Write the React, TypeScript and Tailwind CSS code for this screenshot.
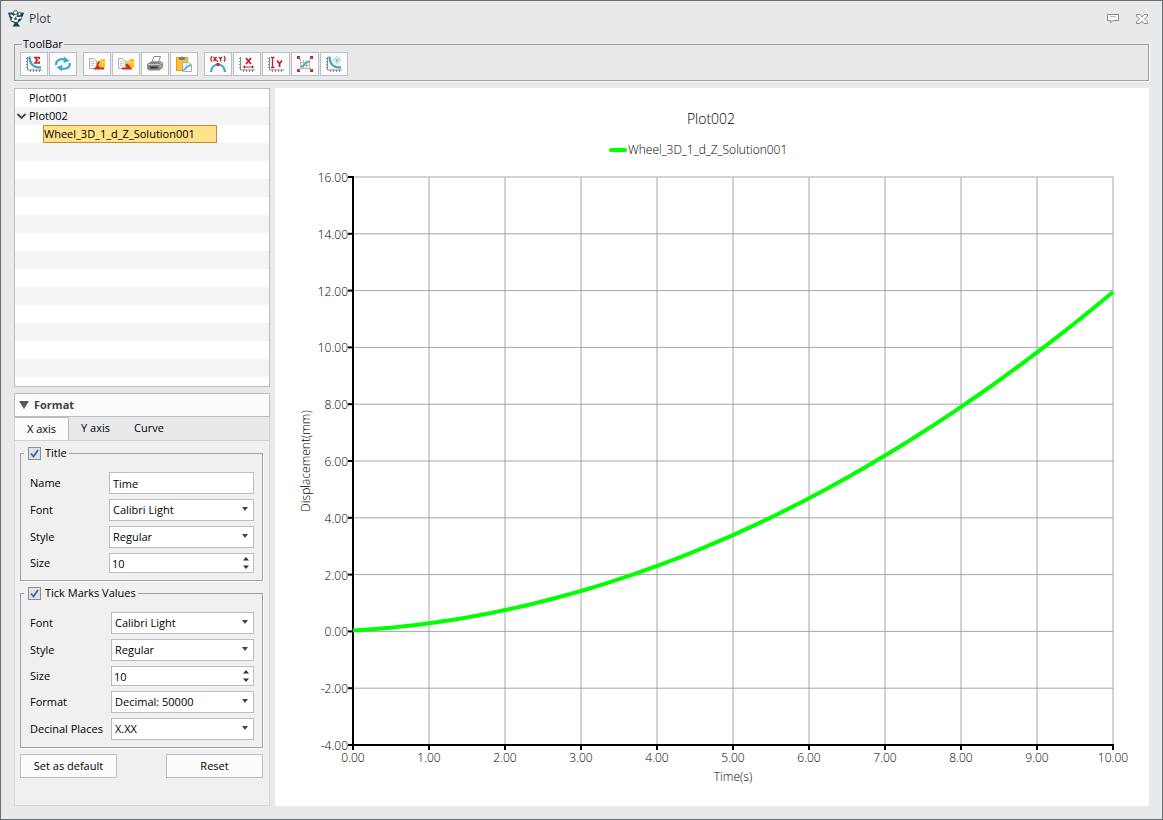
import { useState } from "react";
import type { ReactNode } from "react";

const icons: Record<string, ReactNode> = {
  curveSum: (
    <>
      <ChartAxes />
      <path d="M3.5 0.5C4 8.5 7 11.5 15 11.5" fill="none" stroke="#3fa9c9" strokeWidth="2.4" />
      <path d="M13.2 3.200V1.500H9l2.200 2.700L9 7h4.200V5.500" fill="none" stroke="#c3202c" strokeWidth="1.6" />
    </>
  ),
  refresh: (
    <>
      <path d="M1.200 9C0.500 4 5.500 2.200 11 3.800" fill="none" stroke="#3fa9c9" strokeWidth="2.200" />
      <path d="M9 0.500L14.500 5L8.500 7Z" fill="#3fa9c9" />
      <path d="M14.800 7C15.500 12 10.500 13.800 5 12.200" fill="none" stroke="#3fa9c9" strokeWidth="2.200" />
      <path d="M7 15.500L1.500 11L7.500 9Z" fill="#3fa9c9" />
    </>
  ),
  importFile: (
    <>
      <FileToFolder />
      <path d="M4 13.500L9 8.500L11 11.500H15V13.500Z" fill="#cf2a2a" />
      <path d="M8 9L10.500 5.500" stroke="#cf2a2a" strokeWidth="1.500" />
    </>
  ),
  exportFile: (
    <>
      <FileToFolder />
      <path d="M4 13.500V11.500H9L7 9L9.500 7.500L14.500 13.500Z" fill="#cf2a2a" />
    </>
  ),
  print: (
    <>
      <path d="M5 6L7 0.500H13.500L11.500 6Z" fill="#fff" stroke="#8a8a8a" />
      <path d="M0 8L4 5.500H14L16 7V11L12.500 14.500H2L0 12.500Z" fill="#85878a" />
      <path d="M1 8.500H12L15 7" fill="none" stroke="#c5c7c9" />
      <path d="M3 11.500H10.500" stroke="#36383a" strokeWidth="2" />
      <circle cx="13.500" cy="10" r="1" fill="#d9ce3d" />
    </>
  ),
  paste: (
    <>
      <rect x="0.500" y="1.500" width="11" height="13" fill="#fcc23a" stroke="#e39a1e" />
      <path d="M3 4V1.500H5L6 0L7 1.500H9V4Z" fill="#777b80" />
      <path d="M6.500 6.500H13L15.500 9V15.500H6.500Z" fill="#f8fafb" stroke="#a4abb0" />
      <path d="M7 11H15M10.500 7V15" stroke="#d2d7da" />
      <path d="M7 14C10 14 9 10 15 9" fill="none" stroke="#3fa9c9" strokeWidth="1.500" />
    </>
  ),
  pointXY: (
    <>
      <path d="M1 16C2 6 14 6 15 16" fill="none" stroke="#3fa9c9" strokeWidth="2.200" />
      <rect x="6.500" y="7" width="3" height="3" fill="#d02530" />
      <path
        d="M2 0Q0 3 2 5.500M3.500 1L6.500 5M6.500 1L3.500 5M7.500 4.500V6M9 1L10.500 3L12 1M10.500 3V5.500M14 0Q16 3 14 5.500"
        fill="none"
        stroke="#c3202c"
        strokeWidth="1.300"
      />
    </>
  ),
  rangeX: (
    <>
      <ChartAxes />
      <path d="M7 2L12 8M12 2L7 8" stroke="#c3202c" strokeWidth="1.800" />
      <path d="M4 11H14.500M5.500 9.500V12.500M13.500 9.500V12.500" stroke="#c3202c" strokeWidth="1.200" />
    </>
  ),
  rangeY: (
    <>
      <ChartAxes />
      <path d="M4.500 1.500V11.500M3 1.500H6.500M3 11.500H6.500" stroke="#c3202c" strokeWidth="1.300" />
      <path d="M9 4.500L11.500 7.500L14 4.500M11.500 7.500V11" fill="none" stroke="#c3202c" strokeWidth="1.800" />
    </>
  ),
  fitAll: (
    <>
      <path d="M3.500 3V12.500H14M6.500 4V12M9.500 4V12M12.500 4V12M4 6.500H13M4 9.500H13" fill="none" stroke="#b4b8bb" />
      <path d="M4 11C8 10 6 7 13 5" fill="none" stroke="#3fa9c9" strokeWidth="1.800" />
      <path
        d="M0.500 3V0.500H3M0.500 0.500L3 3M13 0.500H15.500V3M15.500 0.500L13 3M0.500 13V15.500H3M0.500 15.500L3 13M13 15.500H15.500V13M15.500 15.500L13 13"
        fill="none"
        stroke="#c3202c"
        strokeWidth="1.300"
      />
    </>
  ),
  curveSettings: (
    <>
      <ChartAxes />
      <path d="M3.500 0.500C4 8.500 7 11.500 15 11.500" fill="none" stroke="#3fa9c9" strokeWidth="2.400" />
      <circle cx="11" cy="4" r="3.300" fill="#e3f3f8" stroke="#8fc7da" strokeDasharray="1.500 0.800" />
      <path d="M9.500 3L11 4.500L12.500 3M11 4.500V6" fill="none" stroke="#3f8fb0" />
    </>
  ),
};

const toolGroups = [
  [
    { icon: "curveSum", label: "Curve statistics" },
    { icon: "refresh", label: "Refresh" },
  ],
  [
    { icon: "importFile", label: "Import" },
    { icon: "exportFile", label: "Export" },
    { icon: "print", label: "Print" },
    { icon: "paste", label: "Copy to clipboard" },
  ],
  [
    { icon: "pointXY", label: "Show coordinates" },
    { icon: "rangeX", label: "X range" },
    { icon: "rangeY", label: "Y range" },
    { icon: "fitAll", label: "Fit all" },
    { icon: "curveSettings", label: "Curve settings" },
  ],
];

function ChartAxes() {
  return (
    <>
      <path d="M1.500 1V14H16" fill="none" stroke="#85898d" />
      <path
        d="M0 2.500H1M0 5.500H1M0 8.500H1M0 11.500H1M4.500 14V16M7.500 14V16M10.500 14V16M13.500 14V16"
        stroke="#85898d"
      />
    </>
  );
}

function FileToFolder() {
  return (
    <>
      <path d="M0.500 2.500H4.500L7.500 5V12.500H0.500Z" fill="#f6f6f6" stroke="#b0b3b6" />
      <path d="M2 5.500H5M2 7.500H6M2 9.500H5" stroke="#c9cbcd" />
      <path d="M7.500 5H11L12 3H16V12H7.500Z" fill="#fbc02d" />
      <path d="M8 6.500H16" stroke="#ffdf6b" />
    </>
  );
}

function Logo() {
  return (
    <svg className="w-4 h-[18px]" viewBox="0 0 16 18" aria-hidden="true">
      <path d="M0.500 3H15.500L12.500 10L9 13H6.500L3 10Z" fill="#1a84b8" stroke="#0e4d70" />
      <path d="M11.500 5L15.500 3L13 10L9.500 12Z" fill="#0b3a55" />
      <path d="M4.500 16.500L7 13H9.500L12 16.500Z" fill="#123b52" />
      <path
        d="M3 5L6 7.500L4.500 10L8 11M6 7L9 4M8.500 12L10 8L13.500 7.500M10 8L8 7"
        fill="none"
        stroke="#16222a"
        strokeWidth="3"
      />
      <path
        d="M3 5L6 7.500L4.500 10L8 11M6 7L9 4M8.500 12L10 8L13.500 7.500M10 8L8 7"
        fill="none"
        stroke="#fff"
        strokeWidth="1.900"
      />
      <circle cx="7.500" cy="2.500" r="2" fill="#fff" stroke="#20303a" strokeWidth="0.800" />
      <circle cx="11.500" cy="4" r="1.500" fill="#fff" stroke="#20303a" strokeWidth="0.600" />
    </svg>
  );
}

function TitleBar() {
  return (
    <header className="flex items-center h-[35px] pl-[7px] pr-[14px]">
      <Logo />
      <h1 className="ml-[5px] flex-1 text-xs text-[#3c3f4a]">Plot</h1>
      <button className="mr-[17px]" aria-label="Feedback">
        <svg className="w-3 h-3" viewBox="0 0 12 12">
          <path d="M0.500 1.500H11.500V7.500H6L3.500 10V7.500H0.500Z" fill="#fff" stroke="#85888d" strokeLinejoin="round" />
          <path d="M3 3.500H9" stroke="#b5b8bb" />
        </svg>
      </button>
      <button aria-label="Close">
        <svg className="w-3 h-3" viewBox="0 0 12 12">
          <path
            d="M0.500 1.500H4L6 4L8 1.500H11.500V3L8.500 6L11.500 9V10.500H8L6 8L4 10.500H0.500V9L3.500 6L0.500 3Z"
            fill="#fff"
            stroke="#85888d"
          />
        </svg>
      </button>
    </header>
  );
}

function ToolBar() {
  return (
    <fieldset className="mx-[13px] border border-[#a0a0a0] px-[5px] pb-1 shadow-[1px_1px_0_#fff]">
      <legend className="ml-[2px] px-px text-[11px] leading-4 bg-[#e8e9eb]">ToolBar</legend>
      <div className="flex gap-[6px]">
        {toolGroups.map((group, i) => (
          <div key={i} className="flex gap-px">
            {group.map((tool) => (
              <button
                key={tool.icon}
                title={tool.label}
                aria-label={tool.label}
                className="flex items-center justify-center w-7 h-6 bg-[#fcfcfc] border border-[#babdc4] hover:bg-[#e6f1f8]"
              >
                <svg className="w-4 h-4" viewBox="0 0 16 16">
                  {icons[tool.icon]}
                </svg>
              </button>
            ))}
          </div>
        ))}
      </div>
    </fieldset>
  );
}

function PlotTree() {
  return (
    <ul className="h-[299px] overflow-hidden border border-[#babdc4] text-[11px] leading-[18px] bg-[repeating-linear-gradient(#fff_0_18px,#f5f5f5_18px_36px)]">
      <li className="pl-[14px]">Plot001</li>
      <li>
        <div className="flex items-center">
          <svg className="w-[14px] h-[10px]" viewBox="0 0 14 10">
            <path d="M2.500 3L6.500 7L10.500 3" fill="none" stroke="#444" strokeWidth="1.800" />
          </svg>
          Plot002
        </div>
        <ul className="pl-7">
          <li className="w-[174px] h-[18px] leading-4 border border-[#c28a35] bg-[#ffe38a]">
            Wheel_3D_1_d_Z_Solution001
          </li>
        </ul>
      </li>
    </ul>
  );
}

function Field({ id, label, children }: { id: string; label: string; children: ReactNode }) {
  return (
    <div className="flex items-center">
      <label htmlFor={id} className="flex-1 whitespace-nowrap">
        {label}
      </label>
      {children}
    </div>
  );
}

function SelectField({ id, label, options, width }: { id: string; label: string; options: string[]; width: string }) {
  return (
    <Field id={id} label={label}>
      <div className={`relative ${width}`}>
        <select id={id} className="block w-full h-[22px] pl-[3px] appearance-none bg-white border border-[#babdc4]">
          {options.map((option) => (
            <option key={option}>{option}</option>
          ))}
        </select>
        <svg className="absolute right-[6px] top-2 w-[6px] h-1 pointer-events-none" viewBox="0 0 6 4">
          <path d="M0 0H6L3 4Z" fill="#444" />
        </svg>
      </div>
    </Field>
  );
}

function SizeField({ id, width }: { id: string; width: string }) {
  return (
    <Field id={id} label="Size">
      <div className={`relative ${width}`}>
        <input
          id={id}
          type="number"
          defaultValue={10}
          className="block w-full h-5 pl-[2px] bg-white border border-[#babdc4] [appearance:textfield] [&::-webkit-inner-spin-button]:appearance-none"
        />
        <svg className="absolute right-[5px] top-1 w-[6px] h-3 pointer-events-none" viewBox="0 0 6 12">
          <path d="M0 3.500H6L3 0ZM0 8.500H6L3 12Z" fill="#333" />
        </svg>
      </div>
    </Field>
  );
}

function OptionGroup({ title, children }: { title: string; children: ReactNode }) {
  return (
    <fieldset className="border border-[#a0a0a0] pl-[9px] pr-2 pb-[7px] pt-[11px] shadow-[1px_1px_0_#fff]">
      <legend className="-ml-[6px] pl-1 pr-[2px] bg-[#f0f0f0]">
        <label className="flex items-center gap-1 leading-4">
          <span className="relative">
            <input
              type="checkbox"
              defaultChecked
              className="peer block w-[13px] h-[13px] appearance-none border border-[#8e8f8f] bg-[#dde3ea]"
            />
            <svg
              className="absolute inset-0 w-[13px] h-[13px] pointer-events-none invisible peer-checked:visible"
              viewBox="0 0 13 13"
            >
              <path d="M3 6.500L5.500 9.500L10 3" fill="none" stroke="#48648c" strokeWidth="1.800" />
            </svg>
          </span>
          {title}
        </label>
      </legend>
      <div className="flex flex-col gap-[5px]">{children}</div>
    </fieldset>
  );
}

function FormatPanel() {
  const [tab, setTab] = useState("X axis");

  return (
    <section className="flex-1 flex flex-col text-[11px]">
      <h2 className="flex items-center h-6 pl-1 border border-[#babdc4] bg-[#fcfcfc] font-bold text-[#3f4246]">
        <svg className="w-[10px] h-2 mr-[5px]" viewBox="0 0 10 8">
          <path d="M0 0H10L5 8Z" fill="#55585f" />
        </svg>
        Format
      </h2>
      <div className="flex h-6 border-x border-b border-[#cfd2d6] bg-[#e8e9eb]" role="tablist">
        {["X axis", "Y axis", "Curve"].map((name) => (
          <button
            key={name}
            role="tab"
            aria-selected={tab === name}
            onClick={() => setTab(name)}
            className={tab === name ? "px-3 bg-[#fcfcfc] border-t border-r border-[#babdc4]" : "px-3"}
          >
            {name}
          </button>
        ))}
      </div>
      <div className="flex-1 flex flex-col gap-1 pl-[5px] pr-[6px] pt-1 bg-[#f0f0f0] border-x border-b border-[#d5d7da]">
        <OptionGroup title="Title">
          <Field id="title-name" label="Name">
            <input
              id="title-name"
              defaultValue="Time"
              className="w-[145px] h-[22px] pl-[3px] bg-white border border-[#babdc4]"
            />
          </Field>
          <SelectField id="title-font" label="Font" options={["Calibri Light"]} width="w-[145px]" />
          <SelectField id="title-style" label="Style" options={["Regular", "Bold", "Italic"]} width="w-[145px]" />
          <SizeField id="title-size" width="w-[145px]" />
        </OptionGroup>
        <OptionGroup title="Tick Marks Values">
          <SelectField id="tick-font" label="Font" options={["Calibri Light"]} width="w-[143px]" />
          <SelectField id="tick-style" label="Style" options={["Regular", "Bold", "Italic"]} width="w-[143px]" />
          <SizeField id="tick-size" width="w-[143px]" />
          <SelectField id="tick-format" label="Format" options={["Decimal: 50000"]} width="w-[143px]" />
          <SelectField id="tick-places" label="Decinal Places" options={["X.XX"]} width="w-[143px]" />
        </OptionGroup>
        <div className="flex justify-between pt-[2px]">
          <button className="w-[97px] h-6 bg-[#fcfcfc] border border-[#babdc4]">Set as default</button>
          <button className="w-[97px] h-6 bg-[#fcfcfc] border border-[#babdc4]">Reset</button>
        </div>
      </div>
    </section>
  );
}

// Plot area inside the 874x718 chart
const LEFT = 78;
const TOP = 89;
const RIGHT = 838;
const BOTTOM = 657;

const xTicks = [0, 1, 2, 3, 4, 5, 6, 7, 8, 9, 10];
const yTicks = [-4, -2, 0, 2, 4, 6, 8, 10, 12, 14, 16];

const toX = (t: number) => LEFT + (t * (RIGHT - LEFT)) / 10;
const toY = (d: number) => BOTTOM - ((d + 4) * (BOTTOM - TOP)) / 20;

const points = Array.from({ length: 101 }, (_, i) => {
  const t = i / 10;
  return `${toX(t)},${toY(0.03 + 0.153 * t + 0.1039 * t * t)}`;
}).join(" ");

function Chart() {
  return (
    <svg
      className="w-full h-full font-['Open_Sans',sans-serif] font-light"
      viewBox="0 0 874 718"
      role="img"
      aria-label="Displacement over time"
      fill="#000"
    >
      <text x="436" y="36" fontSize="14" textAnchor="middle">Plot002</text>
      <path d="M336 62H350" stroke="#00ff00" strokeWidth="4" strokeLinecap="round" />
      <text x="353" y="66" fontSize="12">Wheel_3D_1_d_Z_Solution001</text>

      {xTicks.map((t) => (
        <g key={t}>
          <path d={`M${toX(t)} ${TOP}V${BOTTOM}`} stroke="#a6a6a6" />
          <path d={`M${toX(t)} ${BOTTOM}v5`} stroke="#000" strokeWidth="2" />
          <text x={toX(t)} y="674" fontSize="12" textAnchor="middle">{t.toFixed(2)}</text>
        </g>
      ))}
      {yTicks.map((d) => (
        <g key={d}>
          <path d={`M${LEFT} ${toY(d)}H${RIGHT}`} stroke="#a6a6a6" />
          <path d={`M${LEFT} ${toY(d)}h-5`} stroke="#000" strokeWidth="2" />
          <text x="73" y={toY(d) + 5} fontSize="12" textAnchor="end">{d.toFixed(2)}</text>
        </g>
      ))}
      <path d={`M${LEFT} ${TOP - 1}V${BOTTOM}H${RIGHT + 1}`} fill="none" stroke="#000" strokeWidth="2" />
      <polyline points={points} fill="none" stroke="#00ff00" strokeWidth="4" />

      <text x="458" y="693" fontSize="12" textAnchor="middle">Time(s)</text>
      <text transform="translate(35 373) rotate(-90)" fontSize="12" textAnchor="middle">
        Displacement(mm)
      </text>
    </svg>
  );
}

export default function App() {
  return (
    <div className="min-h-screen flex flex-col bg-[#e8e9eb] border border-[#686e76] font-['Open_Sans',sans-serif] text-black">
      <TitleBar />
      <ToolBar />
      <main className="flex-1 flex gap-[5px] mt-[7px] mx-[13px] mb-[13px]">
        <div className="w-64 shrink-0 flex flex-col gap-[6px]">
          <PlotTree />
          <FormatPanel />
        </div>
        <div className="flex-1 min-w-0 bg-white">
          <Chart />
        </div>
      </main>
    </div>
  );
}
